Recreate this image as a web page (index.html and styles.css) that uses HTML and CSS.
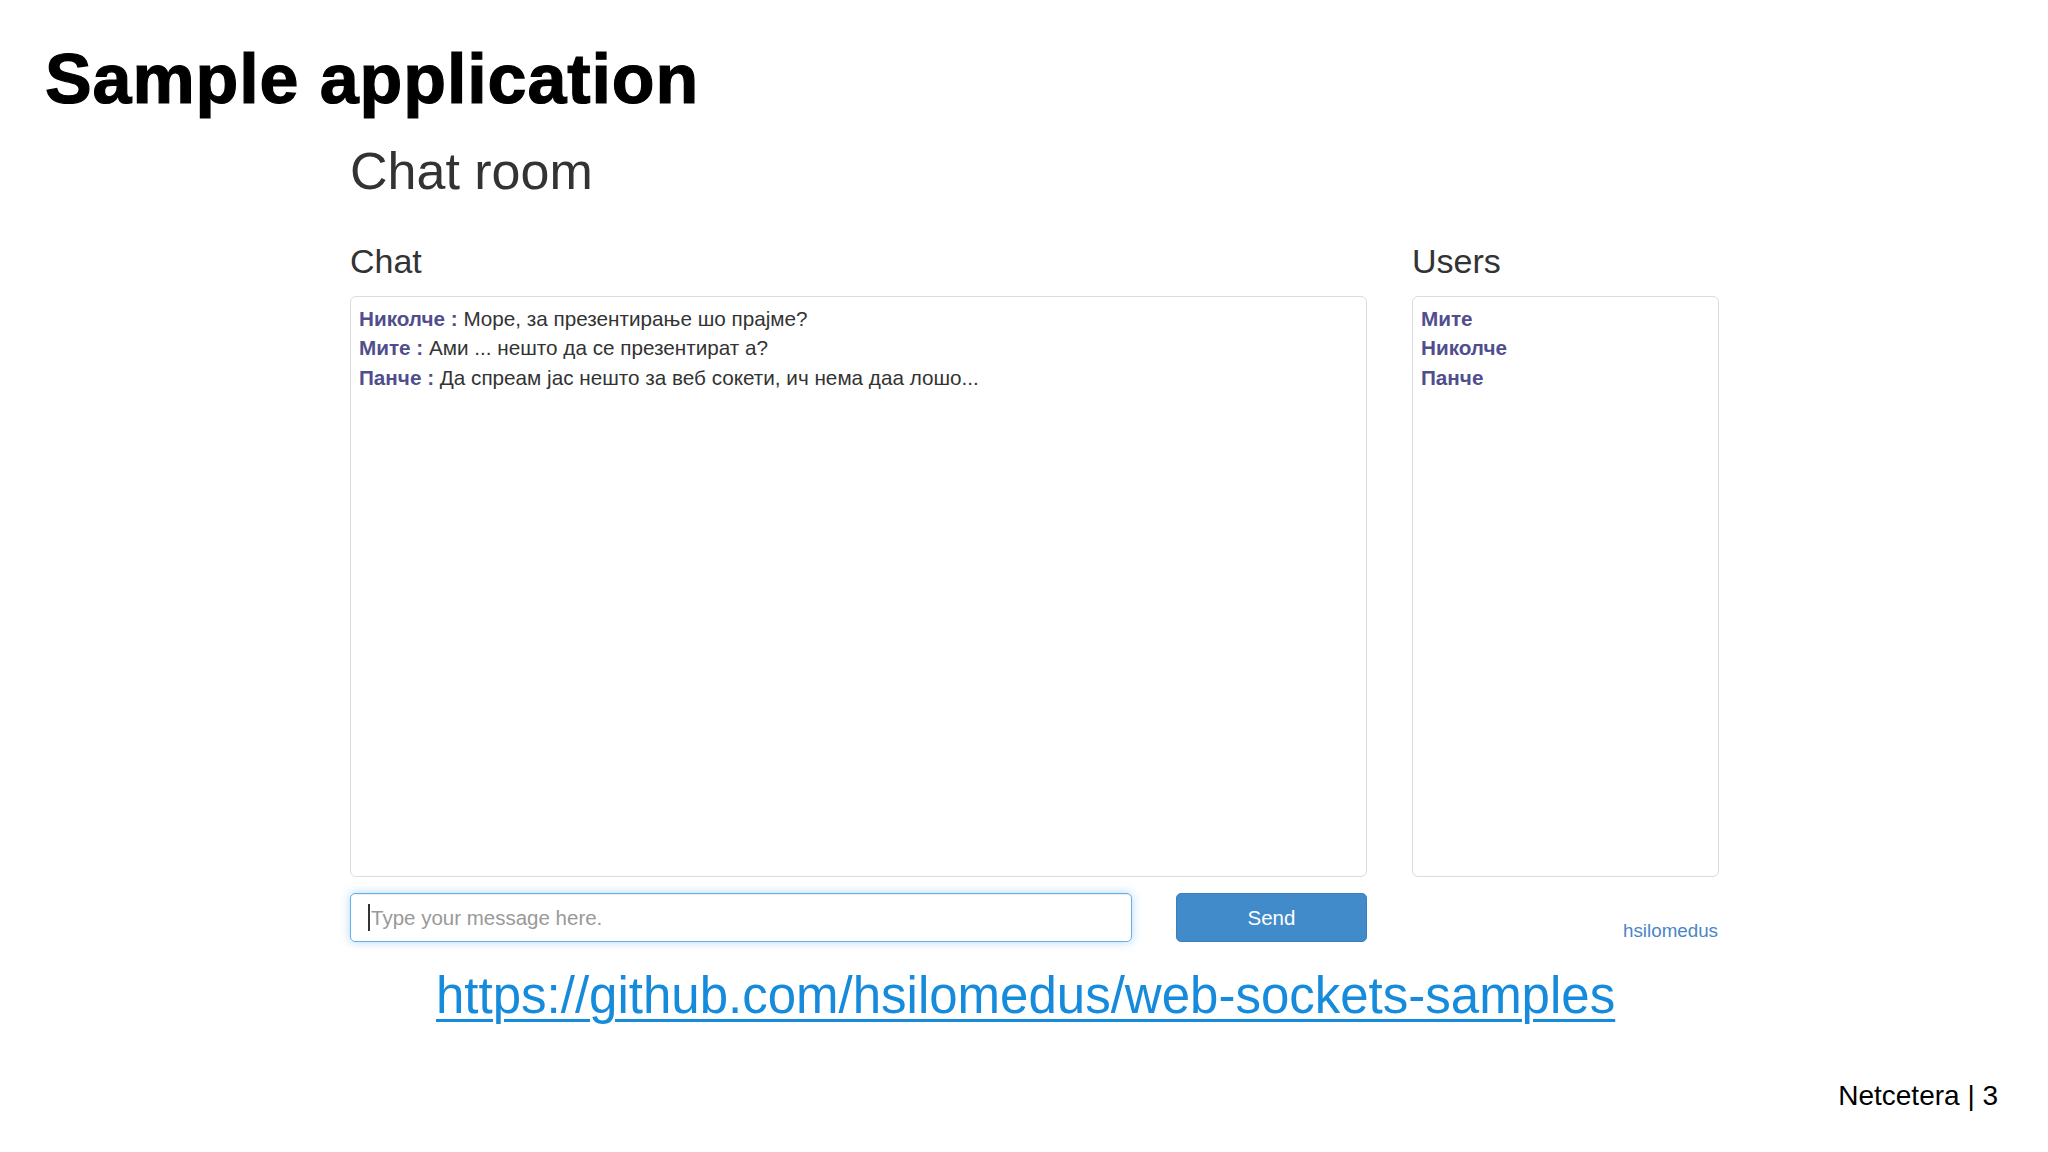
FILE: index.html
```html
<!DOCTYPE html>
<html lang="mk">
<head>
<meta charset="utf-8">
<title>Sample application</title>
<link rel="stylesheet" href="styles.css">
</head>
<body>
<div class="slide">
  <h1 class="slide-title">Sample application</h1>
  <div class="app">
    <h1 class="app-title">Chat room</h1>
    <div class="app-grid">
      <h3 class="col-heading">Chat</h3>
      <h3 class="col-heading">Users</h3>
      <div class="panel chat-panel">
        <div class="msg"><span class="name">Николче :</span> Море, за презентирање шо прајме?</div>
        <div class="msg"><span class="name">Мите :</span> Ами ... нешто да се презентират а?</div>
        <div class="msg"><span class="name">Панче :</span> Да спреам јас нешто за веб сокети, ич нема даа лошо...</div>
      </div>
      <div class="panel users-panel">
        <div class="name">Мите</div>
        <div class="name">Николче</div>
        <div class="name">Панче</div>
      </div>
      <div class="send-row">
        <div class="input"><span class="caret"></span><span class="placeholder">Type your message here.</span></div>
        <div class="btn">Send</div>
      </div>
      <div class="credit"><span class="credit-link">hsilomedus</span></div>
    </div>
  </div>
  <div class="link-row"><a class="repo-link" href="#">https://github.com/hsilomedus/web-sockets-samples</a></div>
  <div class="footer">Netcetera | 3</div>
</div>
</body>
</html>
```

FILE: styles.css
```css
html, body {
  margin: 0;
  padding: 0;
  background: #ffffff;
}

.slide {
  width: 2048px;
  height: 1152px;
  box-sizing: border-box;
  font-family: "Liberation Sans", Arial, sans-serif;
  display: flex;
  flex-direction: column;
  padding-top: 44px;
  overflow: hidden;
}

.slide-title {
  margin: 0 0 0 45px;
  font-size: 70px;
  line-height: 70px;
  font-weight: 700;
  color: #000;
  letter-spacing: 0.9px;
  -webkit-text-stroke: 1.2px #000;
}

.app {
  margin: 29px 0 0 350px;
  width: 1369px;
  color: #333;
}

.app-title {
  margin: 0;
  font-size: 52px;
  line-height: 57px;
  font-weight: 400;
  color: #333;
}

.app-grid {
  margin-top: 42px;
  display: grid;
  grid-template-columns: 1017px 307px;
  column-gap: 45px;
  grid-template-rows: 38px 581px 49px;
  row-gap: 16px;
}

.col-heading {
  margin: 0;
  font-size: 34px;
  line-height: 38px;
  font-weight: 400;
  color: #333;
}

.panel {
  border: 1px solid #dcdcdc;
  border-radius: 6px;
  padding: 7px 8px;
  font-size: 20.7px;
  line-height: 29.4px;
  color: #333;
}

.name {
  font-weight: 700;
  color: #504e8c;
}

.send-row {
  display: flex;
  justify-content: space-between;
}

.input {
  width: 782px;
  flex: none;
  box-sizing: border-box;
  border: 1px solid #66afe9;
  border-radius: 5px;
  box-shadow: inset 0 1px 1px rgba(0, 0, 0, 0.075), 0 0 10px rgba(102, 175, 233, 0.5);
  display: flex;
  align-items: center;
  padding-left: 17px;
  font-size: 20.5px;
}

.caret {
  width: 2px;
  height: 27px;
  background: #333;
  margin-right: 1px;
}

.placeholder {
  color: #999;
}

.btn {
  width: 191px;
  flex: none;
  box-sizing: border-box;
  background: #428bca;
  border: 1px solid #3a7fbd;
  border-radius: 5px;
  color: #fff;
  font-size: 20.5px;
  display: flex;
  align-items: center;
  justify-content: center;
}

.credit {
  display: flex;
  justify-content: flex-end;
  align-items: flex-end;
  padding-bottom: 1px;
}

.credit-link {
  font-size: 18.8px;
  line-height: 21px;
  color: #4a86c5;
  padding-right: 1px;
}

.link-row {
  margin: 28px 0 0 436px;
}

.repo-link {
  font-size: 51px;
  line-height: 51px;
  color: #168bdb;
  text-decoration: underline;
  text-decoration-thickness: 3px;
  text-underline-offset: 6px;
  display: inline-block;
}

.footer {
  margin: 61px 50px 0 0;
  align-self: flex-end;
  font-size: 28px;
  line-height: 28px;
  color: #000;
}
```
